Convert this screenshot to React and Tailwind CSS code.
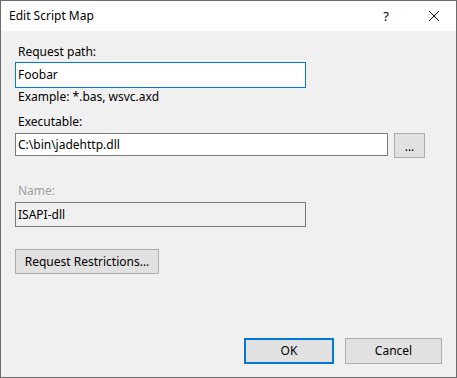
export default function App() {
  const font = { fontFamily: '"Noto Sans", "Liberation Sans", sans-serif' };

  return (
    <div
      className="w-[457px] h-[378px] border border-[#6b6b6b] bg-[#f0f0f0] flex flex-col text-[12px] leading-[16px] text-black"
      style={font}
    >
      {/* Title bar */}
      <div className="h-[30px] bg-white flex items-center shrink-0">
        <span className="pl-[8px] flex-1">Edit Script Map</span>
        <span className="w-[12px] text-center text-[13px] mr-[36px]">?</span>
        <svg width="12" height="12" viewBox="0 0 12 12" className="mr-[16px]">
          <path d="M1 1 L11 11 M11 1 L1 11" stroke="#000" strokeWidth="1" fill="none" />
        </svg>
      </div>

      {/* Body */}
      <div className="flex-1 flex flex-col pl-[14px] pr-[14px] pb-[13px]">
        <label className="mt-[13px] pl-[3px]">Request path:</label>
        <div className="mt-[2px] w-[291px] h-[26px] bg-white border border-[#0078d7] flex items-center pl-[2px]">
          Foobar
        </div>
        <p className="mt-[1px] pl-[3px]">Example: *.bas, wsvc.axd</p>

        <label className="mt-[9px] pl-[3px]">Executable:</label>
        <div className="mt-[3px] flex items-start gap-[6px]">
          <div className="w-[373px] h-[23px] bg-white border border-[#7a7a7a] flex items-center pl-[2px]">
            C:\bin\jadehttp.dll
          </div>
          <button className="w-[31px] h-[25px] bg-[#e1e1e1] border border-[#adadad] flex items-center justify-center pt-[3px]">
            ...
          </button>
        </div>

        <label className="mt-[25px] pl-[3px] text-[#a0a0a0]">Name:</label>
        <div className="mt-[3px] w-[291px] h-[25px] bg-[#f0f0f0] border border-[#7a7a7a] flex items-center pl-[2px]">
          ISAPI-dll
        </div>

        <button className="mt-[22px] w-[144px] h-[25px] bg-[#e1e1e1] border border-[#adadad] flex items-center justify-center">
          Request Restrictions...
        </button>

        <div className="mt-auto flex justify-end gap-[11px]">
          <button className="w-[90px] h-[26px] bg-[#e1e1e1] border-2 border-[#0078d7] flex items-center justify-center">
            OK
          </button>
          <button className="w-[97px] h-[26px] bg-[#e1e1e1] border border-[#adadad] flex items-center justify-center">
            Cancel
          </button>
        </div>
      </div>
    </div>
  );
}
